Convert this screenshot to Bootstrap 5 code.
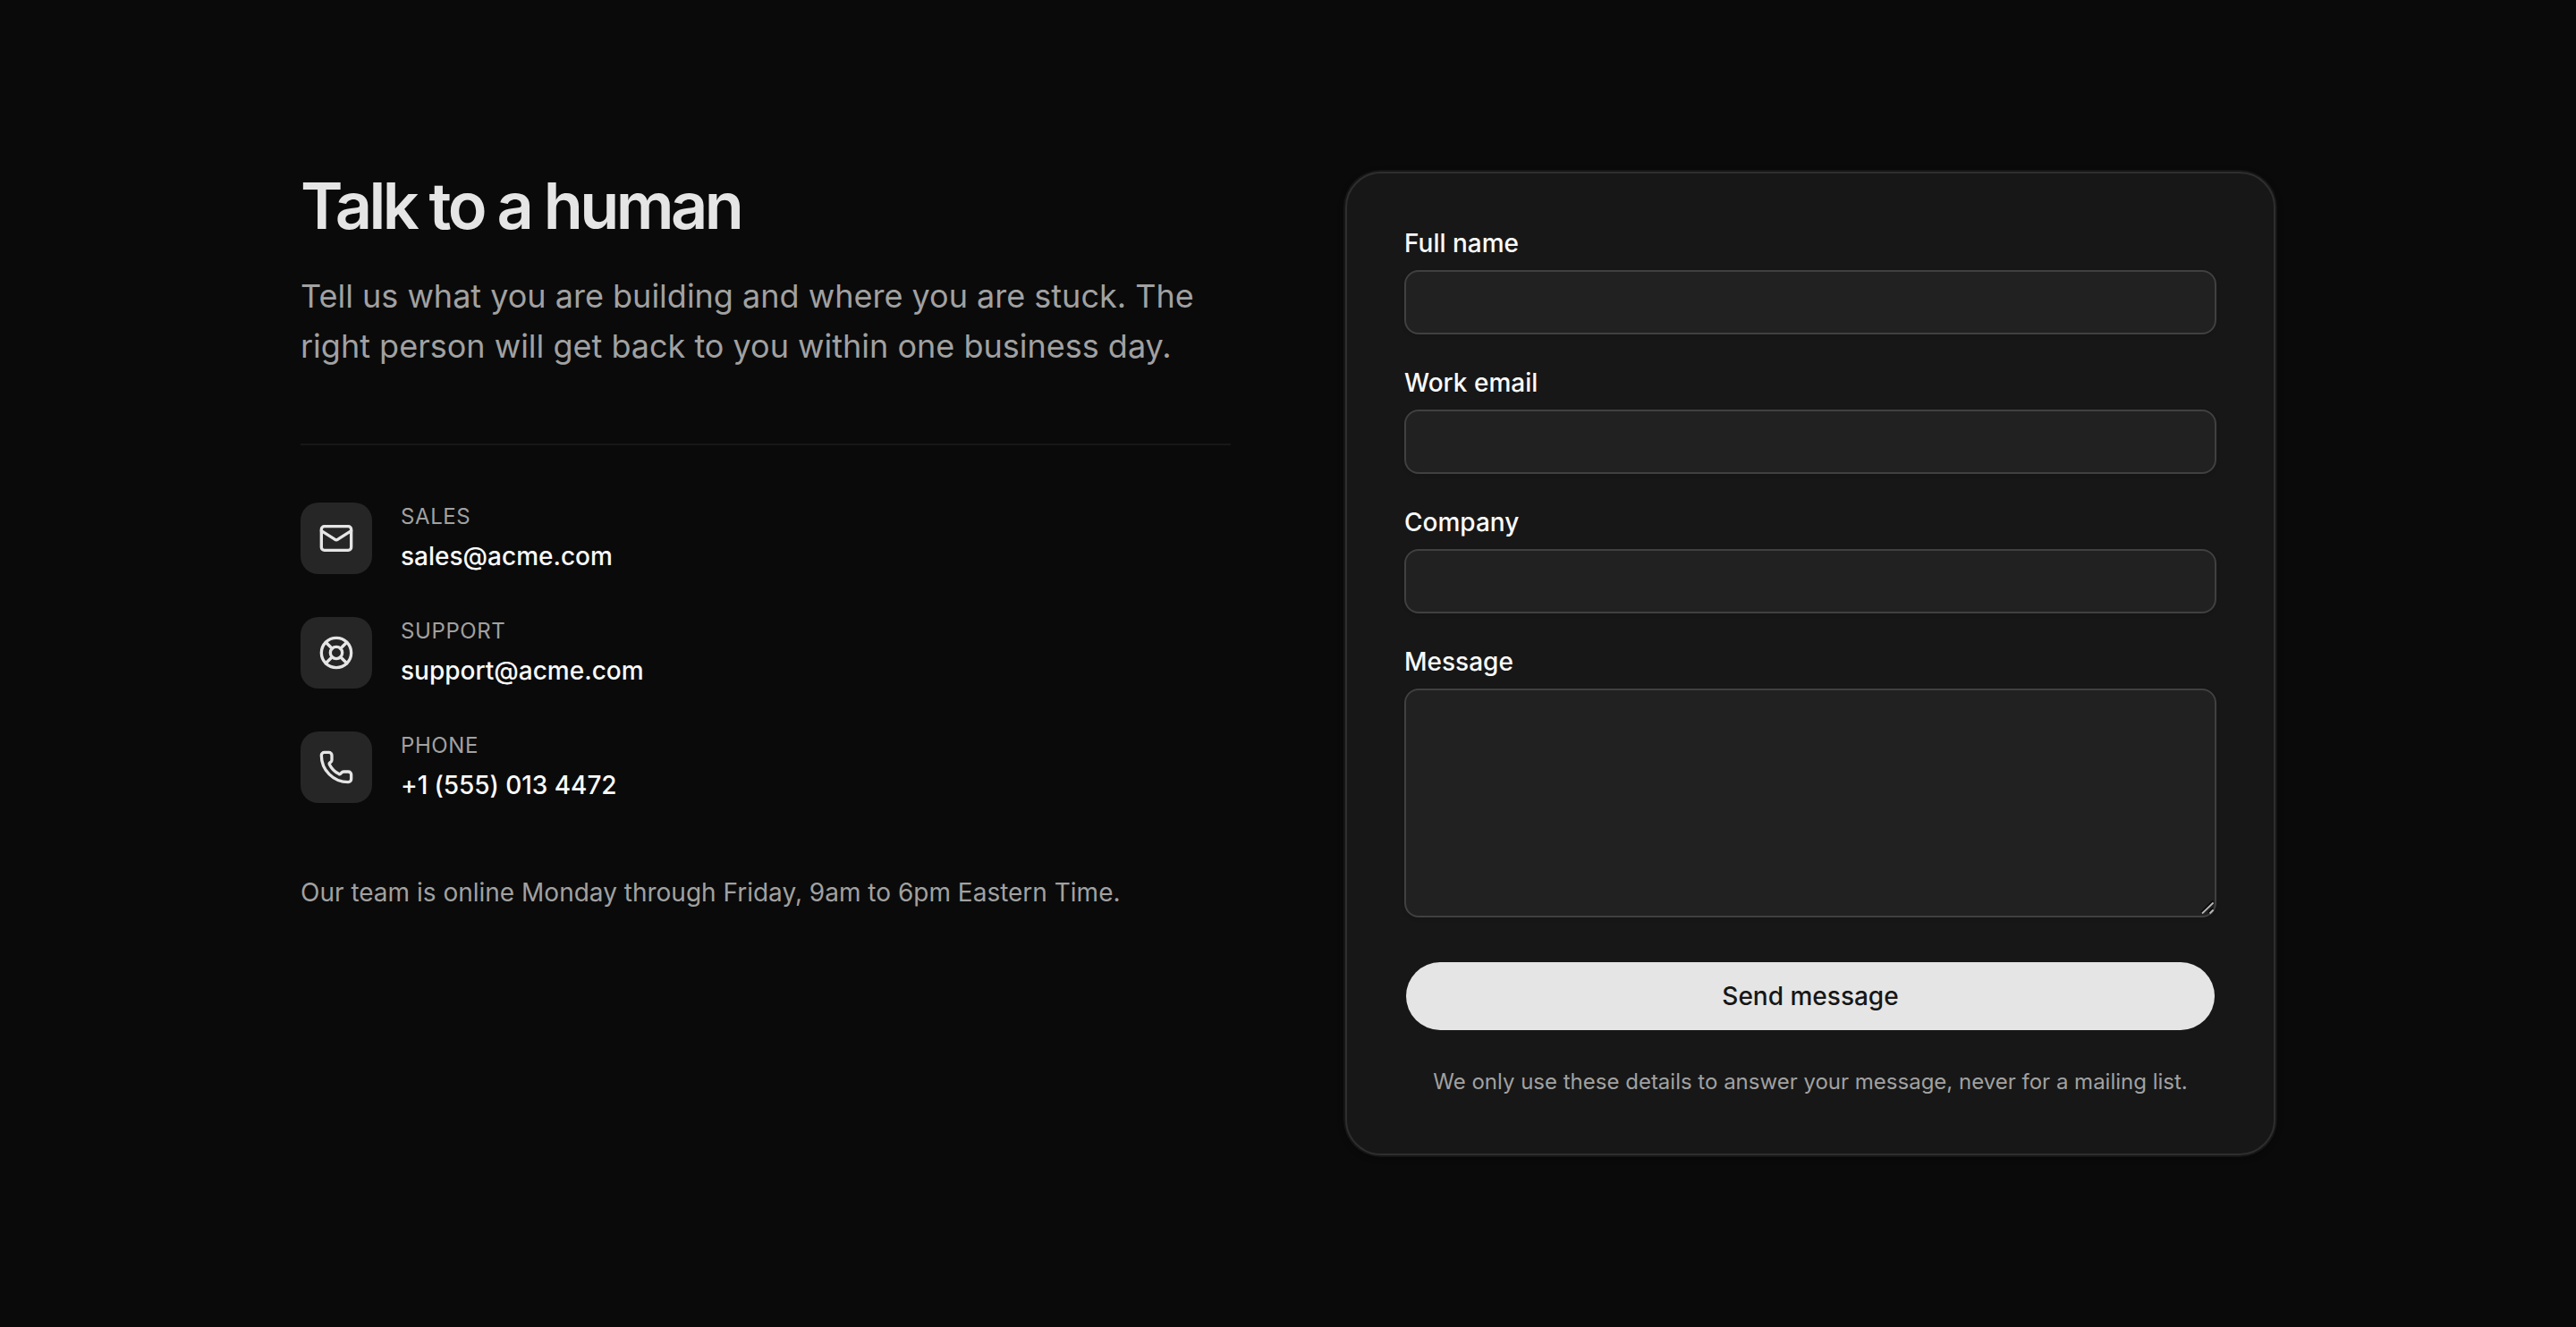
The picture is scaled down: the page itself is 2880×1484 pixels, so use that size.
<!DOCTYPE html>
<html lang="en" data-bs-theme="dark">
<head>
<meta charset="utf-8">
<meta name="viewport" content="width=device-width, initial-scale=1">
<title>Talk to a human</title>
<link href="https://cdn.jsdelivr.net/npm/bootstrap@5.3.0/dist/css/bootstrap.min.css" rel="stylesheet">
<style>
body{background:#0a0a0a;color:#fafafa;font-family:Inter,"Liberation Sans",sans-serif;font-size:28px;line-height:40px}
.contact{padding:192px 0;width:2208px}
.split{--bs-gutter-x:128px}
h1{font-size:72px;line-height:76px;font-weight:600;letter-spacing:-3.6px;color:#e5e5e5;margin:0 0 35px}
.intro{font-size:36px;line-height:56px;color:#a1a1a1}
.rule{height:2px;background:#171717;margin:81px 0 64px}
.channels{gap:48px}
.channel{gap:32px}
.tile{width:80px;height:80px;border-radius:20px;background:#262626;color:#e5e5e5}
.tile svg{width:40px;height:40px;fill:none;stroke:currentColor;stroke-width:2;stroke-linecap:round;stroke-linejoin:round}
.kind{font-size:24px;line-height:32px;letter-spacing:.6px;color:#a1a1a1}
.value{font-weight:500;line-height:40px;margin-top:8px}
.digits{letter-spacing:-.06px}
.hours{color:#a1a1a1;margin:80px 0 0}
.panel{background:#171717;border:2px solid #2e2e2e;border-radius:40px;padding:64px;box-shadow:0 0 0 2px #161616,0 2px 6px 2px rgba(0,0,0,.3)}
.form-label{font-weight:500;line-height:28px;margin-bottom:16px}
.field{margin-bottom:40px}
.form-control,.form-control:focus{background:#212121;border:2px solid #404040;border-radius:16px;height:72px;font-size:28px;box-shadow:0 2px 4px rgba(0,0,0,.1)}
textarea.form-control{height:256px;resize:none}
.grip{right:2px;bottom:3px;width:18px;height:18px;pointer-events:none}
.send{height:80px;border:2px solid transparent;border-radius:40px;background:#e5e5e5;background-clip:padding-box;color:#171717;font-size:28px;font-weight:500;padding:0}
.note{font-size:24px;line-height:32px;color:#a1a1a1;margin:40px 0 0}
</style>
<script src="https://cdn.jsdelivr.net/npm/bootstrap@5.3.0/dist/js/bootstrap.bundle.min.js"></script>
</head>
<body>
<main class="contact mx-auto">
  <div class="row split align-items-start">
    <section class="col-6">
      <h1>Talk to a human</h1>
      <p class="intro mb-0">Tell us what you are building and where you are stuck. The right person will get back to you within one business day.</p>
      <div class="rule"></div>
      <div class="channels d-flex flex-column">
        <div class="channel d-flex align-items-center">
          <div class="tile d-flex align-items-center justify-content-center">
            <svg viewBox="0 0 24 24" aria-hidden="true"><path d="m22 7-8.991 5.727a2 2 0 0 1-2.009 0L2 7"/><rect x="2" y="4" width="20" height="16" rx="2"/></svg>
          </div>
          <div>
            <div class="kind text-uppercase">Sales</div>
            <div class="value">sales@acme.com</div>
          </div>
        </div>
        <div class="channel d-flex align-items-center">
          <div class="tile d-flex align-items-center justify-content-center">
            <svg viewBox="0 0 24 24" aria-hidden="true"><circle cx="12" cy="12" r="10"/><path d="m4.93 4.93 4.24 4.24M14.83 9.17l4.24-4.24M14.83 14.83l4.24 4.24M9.17 14.83l-4.24 4.24"/><circle cx="12" cy="12" r="4"/></svg>
          </div>
          <div>
            <div class="kind text-uppercase">Support</div>
            <div class="value">support@acme.com</div>
          </div>
        </div>
        <div class="channel d-flex align-items-center">
          <div class="tile d-flex align-items-center justify-content-center">
            <svg viewBox="0 0 24 24" aria-hidden="true"><path d="M13.832 16.568a1 1 0 0 0 1.213-.303l.355-.465A2 2 0 0 1 17 15h3a2 2 0 0 1 2 2v3a2 2 0 0 1-2 2A18 18 0 0 1 2 4a2 2 0 0 1 2-2h3a2 2 0 0 1 2 2v3a2 2 0 0 1-.8 1.6l-.468.351a1 1 0 0 0-.292 1.233 14 14 0 0 0 6.392 6.384"/></svg>
          </div>
          <div>
            <div class="kind text-uppercase">Phone</div>
            <div class="value digits">+1 (555) 013 4472</div>
          </div>
        </div>
      </div>
      <p class="hours">Our team is online Monday through Friday, 9am to 6pm Eastern Time.</p>
    </section>
    <div class="col-6">
      <form class="panel">
        <div class="field">
          <label class="form-label d-block" for="name">Full name</label>
          <input class="form-control d-block" id="name" type="text">
        </div>
        <div class="field">
          <label class="form-label d-block" for="email">Work email</label>
          <input class="form-control d-block" id="email" type="email">
        </div>
        <div class="field">
          <label class="form-label d-block" for="company">Company</label>
          <input class="form-control d-block" id="company" type="text">
        </div>
        <div class="mb-5">
          <label class="form-label d-block" for="message">Message</label>
          <div class="position-relative">
            <textarea class="form-control d-block" id="message"></textarea>
            <svg class="grip position-absolute" viewBox="0 0 18 18" fill="none" aria-hidden="true">
              <path d="M3 15.5 16 2.5M11 15.5 16 10.5" stroke="#080808" stroke-width="2"/>
              <path d="M4 16.5 16.5 4.5M12.5 16.5 16.5 12.5" stroke="#b9b9b9" stroke-width="1.8"/>
            </svg>
          </div>
        </div>
        <button class="btn send w-100" type="button">Send message</button>
        <p class="note text-center">We only use these details to answer your message, never for a mailing list.</p>
      </form>
    </div>
  </div>
</main>
</body>
</html>
